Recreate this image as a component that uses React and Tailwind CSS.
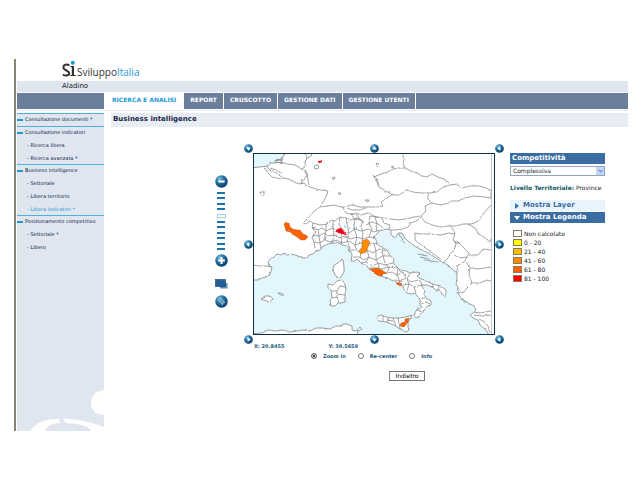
import { useState } from "react";

const tabs = ["REPORT", "CRUSCOTTO", "GESTIONE DATI", "GESTIONE UTENTI"];

const menu = [
  { title: "Consultazione documenti *", items: [] },
  { title: "Consultazione indicatori", items: ["Ricerca libera", "Ricerca avanzata *"] },
  { title: "Business intelligence", items: ["Settoriale", "Libera territorio", "Libera indicatori *"] },
  { title: "Posizionamento competitivo", items: ["Settoriale *", "Libero"] },
];

const legend = [
  { label: "Non calcolato", color: "bg-white" },
  { label: "0 - 20", color: "bg-[#ffff00]" },
  { label: "21 - 40", color: "bg-[#ffbf00]" },
  { label: "41 - 60", color: "bg-[#ff8c00]" },
  { label: "61 - 80", color: "bg-[#ff6000]" },
  { label: "81 - 100", color: "bg-[#ff0000]" },
];

const arrows = {
  up: "M5 2.6 L7.6 6 H2.4 Z",
  down: "M5 7.4 L7.6 4 H2.4 Z",
  left: "M2.6 5 L6 2.4 V7.6 Z",
  right: "M7.4 5 L4 2.4 V7.6 Z",
};

const Orb = ({ label, className, children }) => (
  <button type="button" aria-label={label} className={`block rounded-full ${className}`}>
    <svg viewBox="0 0 10 10" className="block w-full h-full">
      <defs>
        <radialGradient id="orb" cx="35%" cy="28%" r="75%">
          <stop offset="0" stopColor="#8cc3de" />
          <stop offset="0.4" stopColor="#2478a8" />
          <stop offset="1" stopColor="#073c66" />
        </radialGradient>
      </defs>
      <circle cx="5" cy="5" r="4.8" fill="url(#orb)" />
      {children}
    </svg>
  </button>
);

const Pan = ({ dir, label }) => (
  <Orb label={label} className="w-[9px] h-[9px] justify-self-center self-center">
    <path d={arrows[dir]} fill="#fff" />
  </Orb>
);

const ItalyMap = () => (
  <svg
    viewBox="254 153 240 180"
    role="img"
    aria-label="Mappa delle province"
    className="block w-full border border-[#0d2f47] bg-white"
  >
    {/* roughens the coast and border lines */}
    <filter id="rough" filterUnits="userSpaceOnUse" x="250" y="150" width="250" height="190">
      <feTurbulence type="fractalNoise" baseFrequency="0.25" numOctaves="1" seed="4" />
      <feDisplacementMap in="SourceGraphic" scale="2.5" xChannelSelector="R" yChannelSelector="G" />
    </filter>

    <g filter="url(#rough)">
      {/* sea */}
      <g fill="#e2f6fc" stroke="#74787b" strokeWidth="0.7" strokeLinejoin="round">
        <path d="M250 149 L287 149 L283 156 L281 158 L278 159 L275 162 L271 162 L267 165 L260 166 L250 167 Z" />
        <path
          d="M249 279 L258 279 L262 277 L266 276 L270 273 L271 270 L272 266 L269 265 L268 261 L271 257 L274 256 L277 253 L281 254 L284 252 L288 254 L292 253
          L298 255 L303 257 L307 257 L309 254 L313 253 L316 250 L320 249 L322 246 L328 243 L333 242 L337 241 L342 244 L347 245 L350 249 L352 254 L351 260
          L355 260 L357 258 L361 262 L367 265 L370 269 L373 270 L376 273 L380 275 L384 276 L388 277 L391 279 L395 280 L398 283 L400 285 L402 284 L404 288 L407 292
          L412 293 L415 292 L418 296 L420 298 L420 304 L422 306 L419 308 L417 308 L415 312 L414 315 L416 317 L420 315 L423 311 L425 308 L427 305 L431 304 L431 300
          L426 297 L424 293 L425 289 L422 286 L422 284 L427 284 L432 286 L436 289 L440 289 L442 293 L445 295 L446 292 L446 289 L441 285 L436 284 L430 282
          L424 279 L419 277 L417 275 L420 272 L417 271 L410 272 L406 270 L400 269 L397 266 L394 263 L393 258 L389 253 L387 249 L381 246 L377 243 L376 239
          L374 236 L377 233 L379 230 L387 228 L391 229 L391 233 L394 237 L396 236 L398 232 L402 232 L404 236 L408 240 L412 243 L416 246 L424 250 L430 253 L436 257 L442 261
          L448 264 L453 269 L457 272 L457 278 L456 283 L459 288 L458 293 L462 297 L465 300 L470 303 L474 305 L476 309 L473 312 L470 314 L473 317 L478 319
          L480 324 L485 328 L492 338
          L356 338 L358 330 L362 328 L360 326 L356 330 L352 329
          L352 325 L347 323 L343 323 L340 325 L336 325 L330 328 L322 327 L316 327 L310 330 L303 329
          L297 330 L290 331 L283 329 L275 330 L268 329 L262 332 L249 333 Z"
        />
      </g>

      {/* islands */}
      <g fill="#fff" stroke="#74787b" strokeWidth="0.7" strokeLinejoin="round">
        <path d="M342 258 L343 259 L344 266 L344 271 L341 276 L339 277 L335 274 L333 268 L334 264 L340 261 Z" />
        <path d="M341 279 L344 281 L346 287 L345 294 L345 301 L341 302 L338 302 L335 305 L331 305 L330 300 L332 296 L331 289 L328 287 L328 283 L333 284 L337 280 Z" />
        <path d="M332 290 L337 290 L340 285 L345 286 M337 290 L337 296 L332 297 M337 293 L345 294 M337 296 L339 302" fill="none" />
        <path d="M261 298 L265 295 L270 295 L273 298 L269 301 L266 300 Z" />
        <path d="M278 292 L281 292 L284 294 L281 294 Z" />
        <path d="M378 315 L381 314 L386 316 L392 317 L400 317 L406 316 L412 314 L410 318 L408 321 L408 326 L409 329 L406 331 L400 328 L394 324 L386 321 L379 320 L377 318 Z" />
        <path d="M383 315 V320 M389 317 L387 321 M393 317 L396 325 M398 317 L400 328 M387 319 L393 320" fill="none" />
        <path d="M399 234 L402 237 L401 240 M401 239 L405 242 M418 253 L427 255 M420 256 L429 258 M424 259 L438 261 M460 297 L466 302" fill="none" />
      </g>

      {/* national borders */}
      <g fill="none" stroke="#7c7c7c" strokeWidth="0.7" strokeLinejoin="round">
        <path d="M267 166 L270 169 L275 171 L279 174 L283 177 L289 178 L294 181 L299 183 L304 182 L307 185 L313 187 L320 189 L328 190 L326 196 L323 201 L320 206" />
        <path d="M264 167 L268 172 L272 176 L281 178 M270 167 L276 169 L282 173" />
        <path d="M275 162 L281 161 L288 163 L295 164 L300 167 L304 170 L307 174 L305 178 L302 180 M301 178 L303 183" />
        <path d="M305 150 L307 158 L304 161 L306 165 L302 168 L307 172 L308 178 L309 184" />
        <path d="M307 157 L311 155 L313 153" />
        <path d="M276 158 L282 160 M277 161 L283 163 M274 160 L283 158 L280 163" />
        <path d="M320 206 L314 210 L311 214 L307 218 L303 222 L306 223 L310 220 L313 222 L312 227 L316 226" />
        <path d="M320 206 L327 205 L334 204 L341 206 L344 206 L352 204 L360 206 L370 206 L377 206 L383 205 L381 201 L387 197 L393 193" />
        <path d="M343 206 L345 211 L349 213 L356 212 L361 214 L368 212 L374 215 L379 217" />
        <path d="M347 207 L352 209 L360 209 L365 207" />
        <path d="M313 222 L320 224 L327 223 L331 219 L335 220 L340 216 L346 217 L351 219 L357 217 L363 220" />
        <path d="M402 150 L404 158 L403 162 L405 167 M374 176 L381 173 L388 171 L393 168 L399 167 L405 167 L411 170 L417 172 L422 175 L427 176 L432 173 L438 176 L444 178 L449 182 L451 184" />
        <path d="M374 176 L377 181 L379 186 L386 190 L393 194 L399 194 L407 189 L413 191 L421 192 L429 192 L437 191 L443 186 L450 184" />
        <path d="M451 184 L457 183 L462 187 L470 185 L480 185 L486 187 L491 190" />
        <path d="M428 192 L428 198 L432 202 L441 204 L449 202 L451 200 L458 200 L465 197 L474 195 L484 196 L491 197 M491 188 V197" />
        <path d="M432 202 L425 205 L426 210 L422 214 L421 216 L425 221 L432 224 L440 226 L448 225 L456 225 L463 223 L471 223 L477 221 L483 213 L491 204" />
        <path d="M370 215 L377 216 L390 218 L399 219 L410 217 L420 215 M421 216 L416 220 L411 222 L408 226 L402 228 L396 229 L391 229" />
        <path d="M468 223 L475 227 L478 232 L484 236 L490 241 L491 238" />
        <path d="M415 232 L420 233 L429 233 L441 234 L449 232 L455 233 L453 239 L456 243 L454 249 L450 253 L448 257 M415 232 L415 239 L420 243 L428 249 L435 254 L442 259 M451 225 L454 230 L455 234" />
        <path d="M454 240 L460 242 M448 257 L444 261 M454 254 L460 257 L467 256 L469 252 L464 247 L459 242 L455 242 M467 256 L464 261 L458 264 L457 270" />
        <path d="M469 254 L478 254 L483 248 L491 249 M466 261 L470 267 L469 274 L472 282 L467 287 L464 291 L459 292 M470 267 L479 268 L491 266 M471 282 L480 282 L487 279 L491 280" />
        <path d="M315 247 L314 241 L312 236 L316 231 L312 227" />
        <path d="M252 264 L260 265 L267 265 L271 266 M473 311 L480 312 L491 310 M474 314 L482 315 L491 314 M479 318 L485 321 L488 325 L490 331" />
        <path d="M314 165 L318 164 L319 167 L315 168 Z M332 177 L335 176 L334 179 Z M338 192 L341 192 L340 194 Z M365 199 L369 199 L368 201 Z M260 191 L264 191 L264 194 L261 194 Z M376 162 L379 163 L377 165 Z M373 174 L377 179 L379 184 M391 165 L394 166 L392 167 Z" />
      </g>

      {/* italian provinces */}
      <g fill="none" stroke="#7c7c7c" strokeWidth="0.7" strokeLinejoin="round">
        <path d="M312 227 L318 229 L322 227 L326 230 L333 227 L337 231 L343 229 L349 232 L355 228 L361 230 L368 228 L374 231 L379 229" />
        <path d="M313 234 L319 235 L324 232 L328 235 L334 234 L339 237 L345 235 L351 238 L357 236 L363 238 L369 236 L375 237" />
        <path d="M314 241 L320 242 L325 239 L330 241 L337 239 L342 242 L349 240 L355 244 L361 242 L367 245 L372 242 L377 243" />
        <path d="M318 229 L319 235 L320 242 L321 247 M326 223 L326 230 L324 239 M333 220 L333 227 L334 234 L332 242 M340 217 L339 224 L343 229 L341 236 L342 243" />
        <path d="M346 217 L347 223 L349 232 L347 239 L350 248 M355 218 L354 224 L355 230 L357 236 L355 244 L357 250 M363 220 L361 225 L363 232 L362 240 M370 215 L369 222 L372 228 L369 236" />
        <path d="M351 212 L354 218 L361 219 L366 224 L372 221 L378 223 L383 227 M375 216 L377 223 L376 231 M382 217 L384 222 L390 224 L389 228 M356 213 L360 218" />
        <path d="M350 249 L356 249 L361 252 L367 249 L373 252 L379 248 L386 250 M353 256 L359 256 L364 259 L369 256 L376 259 L382 255 L390 255" />
        <path d="M361 262 L366 261 L372 265 L379 262 L385 264 L393 262 M369 267 L375 267 L382 268 L389 266 L397 267 M367 249 L369 256 L366 261 M374 243 L376 250 L376 259 L379 264 L378 269" />
        <path d="M361 252 L360 257 M382 247 L383 255 L385 262 L389 267 L386 273" />
        <path d="M385 273 L392 271 L397 274 L403 271 L406 277 L400 280 L395 279 M398 267 L397 274 L400 281 M410 272 L407 278 L411 281 L418 279" />
        <path d="M403 284 L409 283 L414 286 L423 284 M407 278 L409 283 L407 290 M414 286 L416 292 M419 279 L422 284 M433 283 L432 287 M439 285 L438 289 M421 297 L425 297 M421 303 L426 301 L430 303 M417 309 L422 311" />
      </g>

      {/* coloured areas */}
      <g stroke="#8a5a3a" strokeWidth="0.4">
        <path d="M284 223 L286 221 L289 222 L290 226 L293 228 L297 229 L300 229 L303 233 L306 234 L308 236 L305 239 L301 239 L297 236 L294 234 L290 231 L286 230 Z" fill="#ff6000" />
        <path d="M362 240 L367 238 L370 241 L368 246 L366 251 L361 253 L359 250 L362 246 Z" fill="#ff8c00" />
        <path d="M370 268 L377 267 L382 269 L386 272 L380 275 L375 273 Z" fill="#ff6000" />
        <path d="M396 282 L400 281 L402 283 L400 285 Z M405 318 L409 317 L408 321 L404 326 L400 325 L401 322 L405 321 Z" fill="#ff6000" />
        <path d="M335 230 L338 228 L341 227 L344 231 L347 234 L343 233 L339 232 Z M318 160 L321 160 L322 161 L319 162 Z" fill="#f00018" stroke="#f00018" />
      </g>
      <path d="M332 226 L334 223 M344 224 L346 227 M356 226 L357 229" stroke="#8fc8dc" strokeWidth="1.2" fill="none" />
    </g>
    <path d="M491.5 153 V333" stroke="#8a8a8a" strokeWidth="0.5" />
  </svg>
);

const ZoomBar = () => (
  <div className="flex flex-col items-center w-[14px] pt-8">
    <Orb label="Zoom indietro" className="w-[13px] h-[13px]">
      <rect x="2.6" y="4.2" width="4.8" height="1.6" fill="#fff" />
    </Orb>
    <div className="flex flex-col justify-between items-center h-[58px] mt-1 mb-1">
      {Array.from({ length: 11 }, (_, i) => (
        <span
          key={i}
          className={i === 4 ? "w-[9px] h-1 border border-[#a8cfe2] bg-white" : "w-2 h-[2px] bg-[#1d73a3]"}
        />
      ))}
    </div>
    <Orb label="Zoom avanti" className="w-[13px] h-[13px]">
      <path d="M4.2 2.4 H5.8 V4.2 H7.6 V5.8 H5.8 V7.6 H4.2 V5.8 H2.4 V4.2 H4.2 Z" fill="#fff" />
    </Orb>
    <button type="button" aria-label="Panoramica" className="mt-3">
      <svg viewBox="0 0 13 10" className="block w-[13px] h-[10px]">
        <rect x="5" y="4" width="7.5" height="5.5" fill="#5f8fb5" />
        <rect x="0.5" y="0.5" width="10" height="7" fill="#235f95" stroke="#12416e" strokeWidth="0.6" />
      </svg>
    </button>
    <Orb label="Misura" className="w-[13px] h-[13px] mt-[6px]">
      <path d="M2.4 4.2 L4.8 2.2 L7.8 5.8 L5.6 7.8 Z" fill="#9cc6dc" />
      <path d="M3.2 5 L5.4 3.2 M4 6 L6.2 4.2 M4.8 7 L7 5 M3.6 3.2 L6.8 6.8" stroke="#1b5d8a" strokeWidth="0.4" />
    </Orb>
  </div>
);

const App = () => {
  const [mode, setMode] = useState("Zoom in");

  return (
    <div className="min-h-screen bg-white px-[14px] pt-[59px] font-['DejaVu_Sans',sans-serif] text-[#17365d]">
      <div className="border-l-2 border-[#8a8474] pl-px">
        {/* Logo */}
        <header>
          <div className="flex items-end h-[22px] pl-[45px] pb-[3px]">
            <svg viewBox="0 0 15 17" className="block w-[15px] h-[18px]" role="img" aria-label="SI">
              <path d="M7.4 5 C5 3.4 1.4 4 1.4 6.8 C1.4 10.2 7.2 9.8 7.2 12.8 C7.2 15.4 3.4 15.6 0.8 14" fill="none" stroke="#333" strokeWidth="2" />
              <path d="M8.4 5.6 H12 V14.4 H13.8 V15.6 H8.2 V14.4 H9.8 V6.8 H8.4 Z" fill="#333" />
              <circle cx="10.8" cy="2.2" r="2" fill="#1d9ad6" />
            </svg>
            <span className="font-['Open_Sans',sans-serif] text-[10px] leading-[12px] text-[#333]">
              Sviluppo<span className="text-[#1d9ad6]">Italia</span>
            </span>
          </div>
          <div className="h-[11px] pl-[45px] bg-[#dfe6ef] text-[7px] leading-[11px] text-[#222]">Aladino</div>
          <nav className="flex h-4 mt-px bg-[#6b7f9c] text-[6px] leading-[14px] font-bold text-white">
            <div className="w-[87px] shrink-0" />
            <a href="#ricerca" className="px-2 bg-white text-[#1d9ad6] whitespace-nowrap">RICERCA E ANALISI</a>
            {tabs.map((tab) => (
              <a key={tab} href="#tab" className="px-[6px] border-r border-white whitespace-nowrap">{tab}</a>
            ))}
          </nav>
          <div className="h-px mt-px bg-[#e8edf3]" />
        </header>

        <div className="flex pt-[2px]">
          {/* Sidebar */}
          <aside className="flex flex-col justify-between w-[87px] shrink-0 bg-[#dfe6ef] text-[5px] text-[#0c2348]">
            <ul>
              {menu.map((group) => (
                <li key={group.title} className={group.items.length ? "" : "pb-px"}>
                  <a href="#menu" className="flex items-center gap-[2px] h-3 pt-px border-t border-[#4db1de] whitespace-nowrap">
                    <span className="w-[6px] h-[2px] bg-[#1d9ad6]" />
                    {group.title}
                  </a>
                  <ul>
                    {group.items.map((item) => (
                      <li key={item} className="h-[13px] pl-[10px] leading-[14px]">
                        <a href="#voce" className={item === "Libera indicatori *" ? "text-[#1d9ad6]" : ""}>- {item}</a>
                      </li>
                    ))}
                  </ul>
                </li>
              ))}
            </ul>
            <svg viewBox="0 0 87 43" className="block w-[87px] h-[43px]" aria-hidden="true">
              <path d="M87 2 C79 2 74 8 74 15 C74 22 79 27 87 27 Z" fill="#fff" />
              <path d="M13 43 C20 34 28 31 41 31 L44 35 C36 35 31 37 28 43 Z M46 31 C62 31 74 34 87 39 V43 H74 C71 37 62 36 49 35 Z" fill="#fff" />
            </svg>
          </aside>

          <main className="flex-1 pl-[7px] pb-[50px]">
            <h1 className="h-[14px] pl-[2px] bg-[#e8edf3] text-[7px] leading-[13px] font-bold text-[#17264a]">Business intelligence</h1>

            <div className="flex items-start mt-4 pl-[103px]">
              <ZoomBar />

              <div className="ml-4 w-[260px] shrink-0">
                <div className="grid grid-cols-[9px_1fr_9px] grid-rows-[10px_auto_9px]">
                  <Pan dir="down" label="Nord ovest" />
                  <Pan dir="up" label="Nord" />
                  <Pan dir="left" label="Nord est" />
                  <Pan dir="left" label="Ovest" />
                  <ItalyMap />
                  <Pan dir="right" label="Est" />
                  <Pan dir="right" label="Sud ovest" />
                  <Pan dir="down" label="Sud" />
                  <Pan dir="left" label="Sud est" />
                </div>
                <div className="flex gap-11 pl-[10px] text-[5px] leading-[5px] font-bold text-[#1c5a80]">
                  <span>X: 20.8455</span>
                  <span>Y: 39.5659</span>
                </div>
                <div className="flex gap-3 mt-1 pl-[67px] text-[5px] leading-[6px] font-bold text-[#1c5a80]">
                  {["Zoom in", "Re-center", "Info"].map((name) => (
                    <label key={name} className="flex items-center gap-[6px] whitespace-nowrap">
                      <input
                        type="radio"
                        name="mode"
                        checked={mode === name}
                        onChange={() => setMode(name)}
                        className="appearance-none w-[6px] h-[6px] rounded-full border border-[#777] bg-white checked:bg-black checked:shadow-[inset_0_0_0_1px_white]"
                      />
                      {name}
                    </label>
                  ))}
                </div>
                <div className="mt-3 pl-[145px]">
                  <button type="button" className="block w-9 h-[10px] border border-[#777] bg-white text-[6px] leading-[8px] text-black">
                    Indietro
                  </button>
                </div>
              </div>

              {/* Layers and legend */}
              <section className="ml-[6px] mt-[10px] w-[95px] text-[6px] text-[#222]">
                <label htmlFor="indice" className="block h-[11px] pl-[2px] bg-[#3a6ea3] text-[7px] leading-[11px] font-bold text-white">
                  Competitività
                </label>
                <div className="relative mt-[2px]">
                  <select id="indice" className="block appearance-none w-full h-[10px] pl-[2px] border border-[#8ba8c2] bg-white text-[6px] leading-[8px]">
                    <option>Complessiva</option>
                  </select>
                  <span className="absolute right-px top-px flex items-center justify-center w-2 h-2 bg-[#c5d5fa] pointer-events-none">
                    <svg viewBox="0 0 6 4" className="w-[5px] h-[4px]">
                      <path d="M0.8 0.8 L3 3 L5.2 0.8" fill="none" stroke="#3c5580" strokeWidth="1.2" />
                    </svg>
                  </span>
                </div>
                <p className="mt-2 h-2 leading-[8px] whitespace-nowrap">
                  <strong className="text-[#0f5a62]">Livello Territoriale:</strong> Province
                </p>
                <button type="button" className="flex items-center gap-1 w-full h-[11px] mt-2 pl-[5px] bg-[#eaf4fc] text-[7px] leading-[11px] font-bold text-[#3a6ea3]">
                  <svg viewBox="0 0 4 6" className="w-1 h-[6px]"><path d="M0 0 L4 3 L0 6 Z" fill="#2f7db0" /></svg>
                  Mostra Layer
                </button>
                <button type="button" className="flex items-center gap-[3px] w-full h-[11px] mt-px pl-1 bg-[#3a6ea3] text-[7px] leading-[11px] font-bold text-white">
                  <svg viewBox="0 0 6 4" className="w-[6px] h-1"><path d="M0 0 H6 L3 4 Z" fill="#fff" /></svg>
                  Mostra Legenda
                </button>
                <ul className="mt-[6px] pl-[3px]">
                  {legend.map(({ label, color }) => (
                    <li key={label} className="flex items-center gap-[2px] h-[9px] leading-[9px]">
                      <span className={`w-[9px] h-[7px] border border-[#8a7a60] ${color}`} />
                      {label}
                    </li>
                  ))}
                </ul>
              </section>
            </div>
          </main>
        </div>
      </div>
    </div>
  );
};

export default App;
